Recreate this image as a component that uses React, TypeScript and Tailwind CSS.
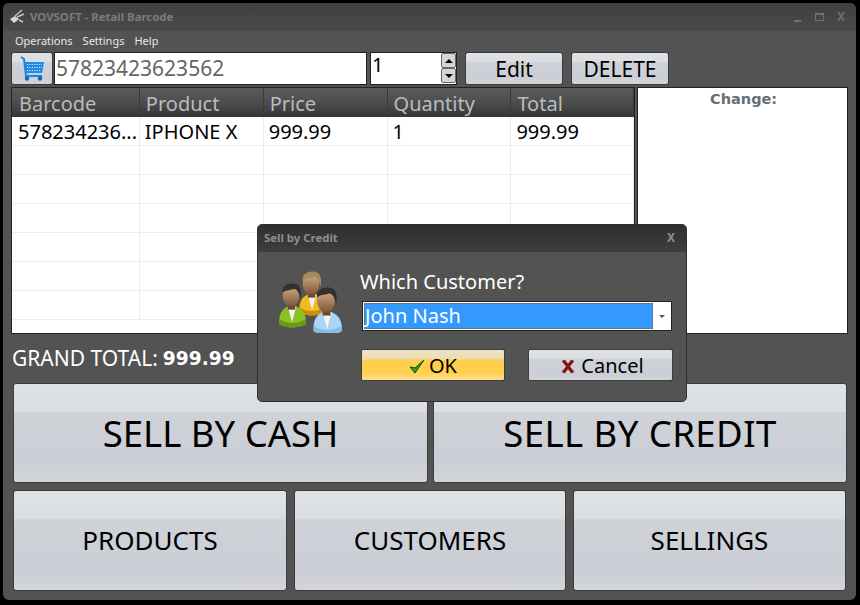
import * as React from "react";

const COLS = [
  { label: "Barcode", w: "w-[128px]", head: "pl-[7px]", cell: "pl-[6px]" },
  { label: "Product", w: "w-[124px]", head: "pl-[6px]", cell: "pl-[5px]" },
  { label: "Price", w: "w-[124px]", head: "pl-[6px]", cell: "pl-[5px]" },
  { label: "Quantity", w: "w-[124px]", head: "pl-[6px]", cell: "pl-[5px]" },
  { label: "Total", w: "w-[123px]", head: "pl-[6px]", cell: "pl-[5px]" },
];
const ROW = ["578234236...", "IPHONE X", "999.99", "1", "999.99"];

function SilverButton({ className, children }: { className: string; children: React.ReactNode }) {
  return (
    <div
      className={
        "flex items-center justify-center rounded-[3px] border border-[#3c3c3c] bg-[linear-gradient(180deg,#e0e3e6_0%,#dadde1_28%,#cfd2d7_29%,#cbced6_80%,#d3d5d9_100%)] text-black " +
        className
      }
    >
      {children}
    </div>
  );
}

function CartIcon() {
  return (
    <svg width="25" height="25" viewBox="0 0 25 25">
      <path d="M1 1 L4 3 L6 20 L22 20" fill="none" stroke="#1c86dc" strokeWidth="2" />
      <path d="M4 6 H24 L22 17 H6 Z" fill="#1e8ae4" />
      <path d="M7 8.5 H22 M7 11.5 H22 M7 14.5 H21" stroke="#cfe8fb" strokeWidth="1.2" strokeDasharray="1.2 1.2" />
      <circle cx="7" cy="22.5" r="2.2" fill="#1468b8" />
      <circle cx="20" cy="22.5" r="2.2" fill="#1468b8" />
    </svg>
  );
}

function Person({ x, y, s, body, dark, hair }: { x: number; y: number; s: number; body: string; dark: string; hair: string }) {
  return (
    <g transform={`translate(${x} ${y}) scale(${s})`}>
      <path d="M-11 27 C-12 17 -8 12 -3 10 L5 10 C11 12 15 18 14 27 C6 31 -5 31 -11 27 Z" fill={body} />
      <path d="M-11 27 C-5 31 6 31 14 27 L14 22 C6 27 -5 27 -11 22 Z" fill={dark} />
      <path d="M-3 10 L5 10 L1 25 Z" fill="#f4f4f4" />
      <rect x="-3" y="6" width="7" height="7" fill="#6d4a2e" />
      <ellipse cx="0" cy="0" rx="8" ry="10" fill="url(#skin)" />
      <path d="M-8 -3 C-9 -10 -3 -12 2 -12 C8 -12 11 -7 9 3 C8 -3 6 -6 3 -7 C-2 -5 -6 -6 -8 -3 Z" fill={hair} />
    </g>
  );
}

function UsersIcon() {
  return (
    <svg width="66" height="64" viewBox="0 0 66 64">
      <defs>
        <linearGradient id="skin" x1="0" y1="0" x2="0" y2="1">
          <stop offset="0" stopColor="#d4ae8a" />
          <stop offset="1" stopColor="#7e5636" />
        </linearGradient>
      </defs>
      <Person x={32} y={15} s={1.05} body="#f2bc1c" dark="#c98f0c" hair="#a98a5e" />
      <Person x={12} y={27} s={1.05} body="#8cc024" dark="#679a14" hair="#33312f" />
      <Person x={47} y={32} s={1.12} body="#a9d6f5" dark="#86bbe6" hair="#33312f" />
    </svg>
  );
}

function Dialog() {
  return (
    <div className="absolute left-[257px] top-[224px] flex h-[178px] w-[430px] flex-col rounded-[5px] border border-[#2e2e2e] bg-[#535353]">
      <div className="flex h-[27px] items-center justify-between rounded-t-[4px] bg-[linear-gradient(180deg,#2f2f2f_0%,#3e3e3e_100%)] pb-[2px] pl-[6px] pr-[11px] text-[11.4px] font-bold text-[#8b8f94]">
        <span>Sell by Credit</span>
        <span className="text-[12px]">X</span>
      </div>
      <div className="flex flex-1">
        <div className="ml-[21px] mt-[17px] h-[64px] w-[66px]">
          <UsersIcon />
        </div>
        <div className="ml-[15px] w-[313px]">
          <div className="mt-[16px] h-[28px] text-[20px] leading-[28px] text-white">Which Customer?</div>
          <div className="ml-[2px] mt-[5px] flex h-[30px] w-[310px] items-center border border-[#222] bg-white p-[1px]">
            <div className="flex h-full flex-1 items-center border border-dotted border-[#8a5a20] bg-[#3399ff] text-[20px] text-white">
              John Nash
            </div>
            <div className="flex w-[17px] justify-center">
              <span className="h-0 w-0 border-x-[3px] border-t-[3px] border-x-transparent border-t-[#555]" />
            </div>
          </div>
          <div className="ml-[1px] mt-[18px] flex gap-[23px]">
            <div className="flex h-[32px] w-[144px] items-center justify-center gap-[4px] rounded-[2px] border border-[#3c3c3c] bg-[linear-gradient(180deg,#efe3c4_0%,#ecdcb4_30%,#ffcf4a_33%,#ffcf4f_75%,#ffe08f_100%)] pt-[2px] text-[20px] text-black">
              <svg width="16" height="15" viewBox="0 0 16 15">
                <path d="M1 8 L6 14 L15 1 L6 9 Z" fill="#3aa01a" stroke="#0d4d0d" strokeWidth="1" />
              </svg>
              OK
            </div>
            <SilverButton className="h-[32px] w-[145px] gap-[6px] !rounded-[2px] pl-[4px] pt-[2px] text-[20px]">
              <svg width="14" height="15" viewBox="0 0 13 14">
                <path d="M1 2 L3.5 1 L6.5 5 L9.5 1 L12 2 L8 7 L12 12 L9.5 13 L6.5 9 L3.5 13 L1 12 L5 7 Z" fill="#8c1208" stroke="#5e0c05" strokeWidth="0.5" />
              </svg>
              Cancel
            </SilverButton>
          </div>
        </div>
      </div>
    </div>
  );
}

export default function App() {
  return (
    <div className="relative h-[605px] w-[860px] overflow-hidden bg-black pl-[3px] pr-[4px] pt-[3px] pb-[5px] font-['Noto_Sans','Open_Sans',sans-serif]">
      <div className="flex h-full flex-col rounded-[6px] bg-[#535353] px-[8px] pb-[9px]">
        {/* title bar */}
        <div className="-mx-[8px] flex h-[28px] shrink-0 items-center justify-between rounded-t-[6px] bg-[linear-gradient(180deg,#404040_0%,#4a4a4a_100%)] pl-[7px] pr-[11px]">
          <div className="flex items-center gap-[5px] text-[11.4px] font-bold text-[#7b7b7b]">
            <svg width="15" height="15" viewBox="0 0 15 15">
              <path d="M0 10 L5 7 L9 10 L4 14 Z" fill="#d6d6d6" />
              <path d="M5 7 L12 1 M7 8 L14 5 M9 11 L13 13" stroke="#c4c4c4" strokeWidth="1.5" fill="none" />
            </svg>
            VOVSOFT - Retail Barcode
          </div>
          <div className="flex items-center text-[#6f6f6f]">
            <span className="mt-[7px] h-[2px] w-[7px] bg-[#6f6f6f]" />
            <span className="ml-[14px] h-[8px] w-[9px] border border-t-2 border-[#6f6f6f]" />
            <span className="ml-[13px] text-[12px] font-bold leading-none">X</span>
          </div>
        </div>

        {/* menu */}
        <div className="mt-[2px] flex h-[19px] shrink-0 items-center gap-[10px] pb-[3px] pl-[4px] text-[11px] text-[#e8e8e8]">
          <span>Operations</span>
          <span>Settings</span>
          <span>Help</span>
        </div>

        {/* toolbar */}
        <div className="flex h-[33px] shrink-0">
          <SilverButton className="w-[42px]">
            <CartIcon />
          </SilverButton>
          <div className="ml-[1px] flex w-[313px] items-center border border-[#222] bg-white pl-[1px] text-[21px] text-[#666]">
            57823423623562
          </div>
          <div className="ml-[3px] flex w-[87px] justify-between border border-[#222] bg-white pl-[1px] text-[20px] leading-[24px] text-black">
            1
            <div className="flex h-[30px] w-[15px] flex-col">
              <div className="flex flex-1 items-center justify-center rounded-[2px] border border-[#666] bg-[#d3d5d9]">
                <span className="h-0 w-0 border-x-[4px] border-b-[4px] border-x-transparent border-b-black" />
              </div>
              <div className="flex flex-1 items-center justify-center rounded-[2px] border border-[#666] bg-[#d3d5d9]">
                <span className="h-0 w-0 border-x-[4px] border-t-[4px] border-x-transparent border-t-black" />
              </div>
            </div>
          </div>
          <SilverButton className="ml-[8px] w-[98px] pt-[2px] text-[21px]">Edit</SilverButton>
          <SilverButton className="ml-[8px] w-[98px] pt-[2px] text-[21px]">DELETE</SilverButton>
        </div>

        {/* table and change panel */}
        <div className="mt-[2px] flex h-[247px] shrink-0">
          <div className="w-[625px] overflow-hidden border border-[#222] bg-white">
            <div className="flex h-[29px] bg-[linear-gradient(180deg,#5c5c5c_0%,#4b4b4b_55%,#353535_100%)]">
              {COLS.map((c) => (
                <div key={c.label} className={"border-r border-[#3a3a3a] text-[20px] leading-[31px] text-[#b9bcbf] " + c.w + " " + c.head}>
                  {c.label}
                </div>
              ))}
            </div>
            {[0, 1, 2, 3, 4, 5, 6].map((r) => (
              <div key={r} className="flex h-[29px] border-b border-[#ececec]">
                {COLS.map((c, i) => (
                  <div key={c.label} className={"border-r border-[#ececec] text-[20px] leading-[29px] text-black " + c.w + " " + c.cell}>
                    {r === 0 ? ROW[i] : ""}
                  </div>
                ))}
              </div>
            ))}
          </div>
          <div className="ml-[2px] w-[211px] border border-[#222] bg-white pl-[2px] pt-[2px] text-center font-['DejaVu_Sans',sans-serif] text-[14.5px] font-bold leading-[18px] text-[#666f78]">
            Change:
          </div>
        </div>

        {/* grand total */}
        <div className="ml-[1px] flex h-[49px] shrink-0 items-center gap-[5px] text-[21px] text-white">
          <span>GRAND TOTAL:</span>
          <span className="font-['DejaVu_Sans',sans-serif] text-[18.6px] font-bold">999.99</span>
        </div>

        {/* action buttons */}
        <div className="ml-[2px] flex h-[100px] shrink-0 gap-[5px]">
          <SilverButton className="w-[415px] text-[36.5px]">SELL BY CASH</SilverButton>
          <SilverButton className="w-[414px] text-[36.5px] tracking-[0.43px]">SELL BY CREDIT</SilverButton>
        </div>
        <div className="ml-[2px] mt-[7px] flex min-h-0 flex-1">
          <SilverButton className="w-[274px] text-[26px]">PRODUCTS</SilverButton>
          <SilverButton className="ml-[7px] w-[272px] text-[26px]">CUSTOMERS</SilverButton>
          <SilverButton className="ml-[7px] w-[273px] text-[26px]">SELLINGS</SilverButton>
        </div>
      </div>
      <Dialog />
    </div>
  );
}
